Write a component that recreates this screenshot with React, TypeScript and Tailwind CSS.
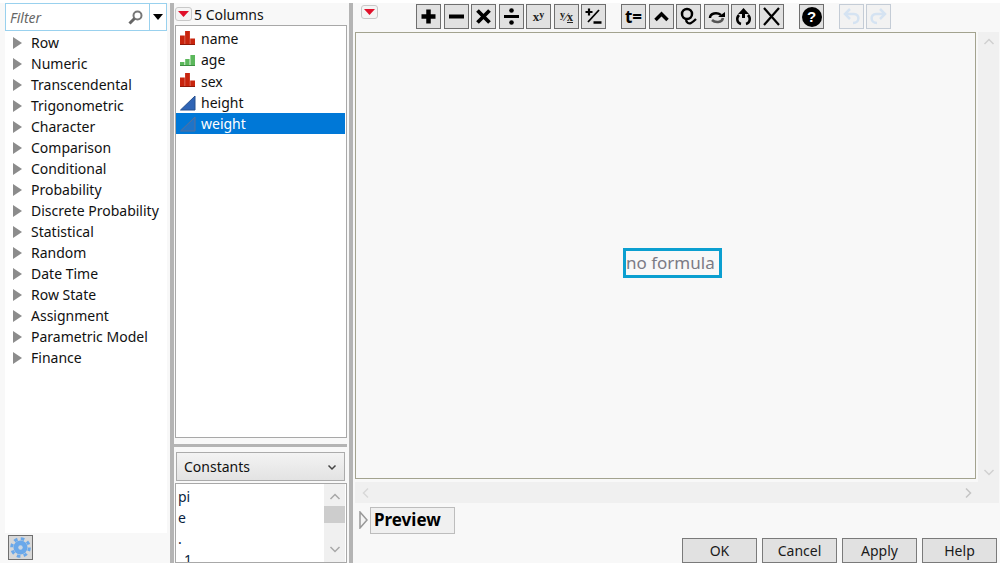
import React from "react";

const font = { fontFamily: '"Noto Sans", "Open Sans", "Liberation Sans", sans-serif' };

const groups = ["Row","Numeric","Transcendental","Trigonometric","Character","Comparison","Conditional","Probability","Discrete Probability","Statistical","Random","Date Time","Row State","Assignment","Parametric Model","Finance"];

function Nominal() {
  return (
    <svg width="16" height="16" viewBox="0 0 16 16" className="shrink-0">
      <path d="M0 4.500h4.800v9.500H0zM5.100 0h4.800v14H5.100zM10.200 7.500h4.800v6.500h-4.800z" fill="#c8250e" />
      <path d="M0 13h15v1H0z" fill="#8f1a0a" />
    </svg>
  );
}
function Ordinal() {
  return (
    <svg width="16" height="16" viewBox="0 0 16 16" className="shrink-0">
      <path d="M0 10h4.400v4H0zM5.200 7h4.400v7H5.200zM10.400 3h4.600v11h-4.600z" fill="#5cb85c" />
      <path d="M0 13h15v1H0z" fill="#3e8e41" />
    </svg>
  );
}
function Continuous({ selected }: { selected?: boolean }) {
  return (
    <svg width="16" height="16" viewBox="0 0 16 16" className="shrink-0">
      <path d="M0.500 15 15 1v14z" fill={selected ? "#1e74c8" : "#2f64b5"} stroke={selected ? "#5a6f98" : "#27508f"} strokeWidth="1" />
    </svg>
  );
}
function RedMenu({ className }: { className?: string }) {
  return (
    <div className={"w-[17px] h-[14px] rounded-[3px] border border-[#c8c8c8] bg-[#f4f4f4] flex items-center justify-center shrink-0 " + (className ?? "")}>
      <svg width="11" height="6" viewBox="0 0 11 6"><path d="M0 0h11L5.500 6z" fill="#e0102a" /></svg>
    </div>
  );
}
function Tool({ children, ml, light }: { children: React.ReactNode; ml: string; light?: boolean }) {
  return (
    <div className={"w-[25px] h-[25px] shrink-0 border flex items-center justify-center " + ml + " " + (light ? "border-[#c4ccd6] bg-[#f2f2f2]" : "border-[#6f6f6f] bg-[#e1e1e1]")}>
      {children}
    </div>
  );
}
function Icon({ children }: { children: React.ReactNode }) {
  return <svg width="19" height="19" viewBox="0 0 19 19" fill="none" stroke="#000" strokeWidth="3">{children}</svg>;
}
function Btn({ label, ml }: { label: string; ml?: string }) {
  return (
    <div className={"w-[75px] h-[25px] border border-[#7a7a7a] bg-[#e1e1e1] flex items-center justify-center text-[14px] text-[#1a1a1a] " + (ml ?? "")}>{label}</div>
  );
}
function Row({ icon, label, selected, h = "h-[21px]" }: { icon: React.ReactNode; label: string; selected?: boolean; h?: string }) {
  return (
    <div className={h + " flex items-center pl-[4px] gap-[5px] text-[14px] " + (selected ? "bg-[#0078d7] text-white" : "text-[#111]")}>
      {icon}
      <span>{label}</span>
    </div>
  );
}
function Chevron({ d, color = "#a8a8a8" }: { d: string; color?: string }) {
  return <svg width="12" height="12" viewBox="0 0 12 12" fill="none" stroke={color} strokeWidth="1.500"><path d={d} /></svg>;
}

export default function App() {
  return (
    <div className="w-[1000px] h-[564px] overflow-hidden bg-white pt-[3px]" style={font}>
      <div className="h-[560px] flex bg-[#f8f8f8]">
        {/* Left column */}
        <div className="w-[170px] shrink-0 flex flex-col pl-[5px] pr-[3px]">
          <div className="h-[28px] flex border border-[#99d1ee] bg-white shrink-0">
            <div className="flex-1 flex items-center pl-[4px] pr-[6px] border-r border-[#99d1ee]">
              <span className="italic text-[14px] text-[#666] flex-1">Filter</span>
              <svg width="15" height="15" viewBox="0 0 15 15" fill="none">
                <circle cx="9.500" cy="5.500" r="4" stroke="#777" strokeWidth="2" />
                <path d="M6.500 8.500 1.500 13.500" stroke="#666" strokeWidth="3" />
              </svg>
            </div>
            <div className="w-[16px] flex items-center justify-center">
              <svg width="10" height="6" viewBox="0 0 10 6"><path d="M0 0h10L5 6z" fill="#000" /></svg>
            </div>
          </div>
          <div className="flex-1 bg-white pt-[1px]">
            {groups.map((g) => (
              <div key={g} className="h-[21px] flex items-center pl-[8px] text-[14px] text-[#111]">
                <svg width="9" height="12" viewBox="0 0 9 12" className="mr-[9px] shrink-0"><path d="M0 0l9 6-9 6z" fill="#8c8c8c" /></svg>
                <span>{g}</span>
              </div>
            ))}
          </div>
          <div className="h-[30px] shrink-0 pl-[3px] pt-[2px]">
            <div className="w-[25px] h-[25px] border border-[#6f6f6f] bg-[#d8d8d8] flex items-center justify-center">
              <svg width="21" height="21" viewBox="0 0 21 21">
                <circle cx="10.500" cy="10.500" r="7" fill="#6aa8ea" />
                <circle cx="10.500" cy="10.500" r="8.800" fill="none" stroke="#6aa8ea" strokeWidth="3" strokeDasharray="3.600 3.310" />
                <circle cx="10.500" cy="10.500" r="2.200" fill="#c9d6e4" />
              </svg>
            </div>
          </div>
        </div>
        {/* Splitter */}
        <div className="w-[4px] bg-[#b4b4b4] shrink-0" />
        {/* Middle column */}
        <div className="w-[174px] shrink-0 flex flex-col pl-[1px] pr-[1px]">
          <div className="h-[22px] flex items-center shrink-0 text-[14px] text-[#111]">
            <RedMenu />
            <span className="ml-[2px]">5 Columns</span>
          </div>
          <div className="h-[413px] shrink-0 border border-[#a8a8a8] bg-white pt-[2px] pr-[1px]">
            <Row icon={<Nominal />} label="name" />
            <Row icon={<Ordinal />} label="age" />
            <Row icon={<Nominal />} label="sex" h="h-[22px]" />
            <Row icon={<Continuous />} label="height" />
            <Row icon={<Continuous selected />} label="weight" selected />
          </div>
          <div className="h-[3px] bg-[#b4b4b4] mt-[6px] -ml-[1px] shrink-0" />
          <div className="mt-[5px] ml-[1px] mr-[2px] h-[29px] shrink-0 border border-[#ababab] bg-gradient-to-b from-[#f3f3f3] to-[#e3e3e3] flex items-center justify-between pl-[7px] pr-[6px] text-[14px] text-[#111]">
            <span>Constants</span>
            <Chevron d="M2.500 4.500 6 8l3.500-3.500" color="#444" />
          </div>
          <div className="mt-[2px] flex-1 border border-[#a8a8a8] bg-white flex overflow-hidden">
            <div className="flex-1 pl-[2px] pt-[2px] text-[14px] text-[#0b1f3f] overflow-hidden">
              <div className="h-[21px] flex items-center">pi</div>
              <div className="h-[21px] flex items-center">e</div>
              <div className="h-[21px] flex items-center">.</div>
              <div className="h-[21px] flex items-center pl-[6px]">1</div>
            </div>
            <div className="w-[21px] mr-[1px] bg-[#f0f0f0] flex flex-col items-center justify-between py-[7px] relative">
              <Chevron d="M1.500 8 6 3.500 10.500 8" />
              <Chevron d="M1.500 4 6 8.500 10.500 4" />
              <div className="absolute left-0 right-0 top-[22px] h-[17px] bg-[#cdcdcd]" />
            </div>
          </div>
        </div>
        {/* Splitter */}
        <div className="w-[4px] bg-[#b4b4b4] shrink-0 ml-[1px]" />
        {/* Right column */}
        <div className="flex-1 flex flex-col min-w-0 pl-[2px] pr-[1px]">
          <div className="h-[29px] shrink-0 flex items-start pt-[1px] relative">
            <RedMenu className="ml-[6px] mt-[1px]" />
            <Tool ml="ml-[38px]"><Icon><path d="M9.500 2.500v14M2.500 9.500h14" strokeWidth="4.500" /></Icon></Tool>
            <Tool ml="ml-[3px]"><Icon><path d="M2 9.500h15" strokeWidth="4" /></Icon></Tool>
            <Tool ml="ml-[2px]"><Icon><path d="M3.500 3.500l12 12M15.500 3.500l-12 12" strokeWidth="3.800" /></Icon></Tool>
            <Tool ml="ml-[3px]"><Icon><path d="M2 9.500h15" strokeWidth="3" /><circle cx="9.500" cy="3.500" r="2.300" fill="#000" stroke="none" /><circle cx="9.500" cy="15.500" r="2.300" fill="#000" stroke="none" /></Icon></Tool>
            <Tool ml="ml-[2px]">
              <span className="text-[13px] font-bold leading-none text-[#222]" style={{ fontFamily: '"Liberation Serif", serif' }}>x<sup className="text-[10px] -top-[3px]">y</sup></span>
            </Tool>
            <Tool ml="ml-[3px]">
              <span className="text-[12px] font-bold leading-none text-[#222]" style={{ fontFamily: '"Liberation Serif", serif' }}><sup className="text-[10px] -top-[3px]">y</sup>⁄<span className="underline">x</span></span>
            </Tool>
            <Tool ml="ml-[2px]"><Icon><path d="M1.500 5h7M5 1.500v7" strokeWidth="2.200" /><path d="M15 3 4 15" strokeWidth="1.800" /><path d="M9.500 15.500h8" strokeWidth="2.500" /></Icon></Tool>
            <Tool ml="ml-[15px]">
              <span className="text-[17px] font-bold leading-none text-black">t=</span>
            </Tool>
            <Tool ml="ml-[3px]"><Icon><path d="M3.500 13 9.500 7l6 6" strokeWidth="3.500" /></Icon></Tool>
            <Tool ml="ml-[2px]"><Icon><circle cx="8" cy="7" r="5" strokeWidth="2.500" /><path d="M7 12c0 4 3 5 5 4s3-2 5-4" strokeWidth="2.300" /></Icon></Tool>
            <Tool ml="ml-[3px]"><Icon><path d="M3 11c0-5 7-6 11-3" strokeWidth="2.500" /><path d="M16 11c-1 5-8 5-11 2" strokeWidth="2.500" stroke="#555" /><path d="M11 10h7V5z" fill="#000" stroke="none" /></Icon></Tool>
            <Tool ml="ml-[2px]"><Icon><path d="M9.500 1 15 7H4z" fill="#000" stroke="none" /><path d="M9.500 6v5" strokeWidth="3" /><path d="M5 8c-3 3-2 8 2 9M14 8c3 3 2 8-2 9" strokeWidth="2.500" /></Icon></Tool>
            <Tool ml="ml-[3px]"><Icon><path d="M2 1l15 17M17 1 2 18" strokeWidth="2.200" /></Icon></Tool>
            <Tool ml="ml-[15px]">
              <div className="w-[20px] h-[20px] rounded-full bg-black text-white text-[15px] font-bold flex items-center justify-center leading-none" style={{ fontFamily: '"Liberation Sans", sans-serif' }}>?</div>
            </Tool>
            <Tool ml="ml-[15px]" light><svg width="19" height="19" viewBox="0 0 19 19" fill="none" stroke="#d5e3f2" strokeWidth="2.500"><path d="M4 7h8c6 0 6 9-1 9" /><path d="M8 2 3 7l5 5" /></svg></Tool>
            <Tool ml="ml-[2px]" light><svg width="19" height="19" viewBox="0 0 19 19" fill="none" stroke="#d5e3f2" strokeWidth="2.500"><path d="M15 7H7c-6 0-6 9 1 9" /><path d="M11 2l5 5-5 5" /></svg></Tool>
          </div>
          <div className="h-[450px] shrink-0 flex">
            <div className="w-[621px] h-[447px] shrink-0 border border-[#a3a38f] flex items-center justify-center">
              <div className="w-[99px] h-[30px] border-[3px] border-[#0b9fd0] flex items-center text-[17px] text-[#7b7b85] mt-[15px] ml-[14px]">no formula</div>
            </div>
            <div className="flex-1 ml-[2px] bg-[#f0f0f0] flex flex-col items-center justify-between pt-[4px] pb-[4px]">
              <Chevron d="M1.500 8 6 3.500 10.500 8" color="#d0d0d0" />
              <Chevron d="M1.500 4 6 8.500 10.500 4" color="#d0d0d0" />
            </div>
          </div>
          <div className="h-[21px] shrink-0 bg-[#f0f0f0] flex items-center justify-between pl-[5px] pr-[25px]">
            <Chevron d="M8 1.500 3.500 6 8 10.500" color="#d8d8d8" />
            <Chevron d="M4 1.500 8.500 6 4 10.500" color="#c4c4c4" />
          </div>
          <div className="h-[35px] shrink-0 flex items-start pt-[4px]">
            <svg width="10" height="18" viewBox="0 0 10 18" className="ml-[4px] mt-[4px] shrink-0"><path d="M1 1l7 8-7 8z" fill="#f4f4f4" stroke="#999" strokeWidth="1.500" /></svg>
            <div className="ml-[1px] w-[85px] h-[27px] border border-[#bdbdbd] bg-[#f0f0f0] flex items-center pl-[3px] pb-[2px] text-[17px] font-bold text-black">Preview</div>
          </div>
          <div className="flex-1 flex justify-end items-start pr-[2px]">
            <Btn label="OK" />
            <Btn label="Cancel" ml="ml-[5px]" />
            <Btn label="Apply" ml="ml-[5px]" />
            <Btn label="Help" ml="ml-[5px]" />
          </div>
        </div>
      </div>
    </div>
  );
}
